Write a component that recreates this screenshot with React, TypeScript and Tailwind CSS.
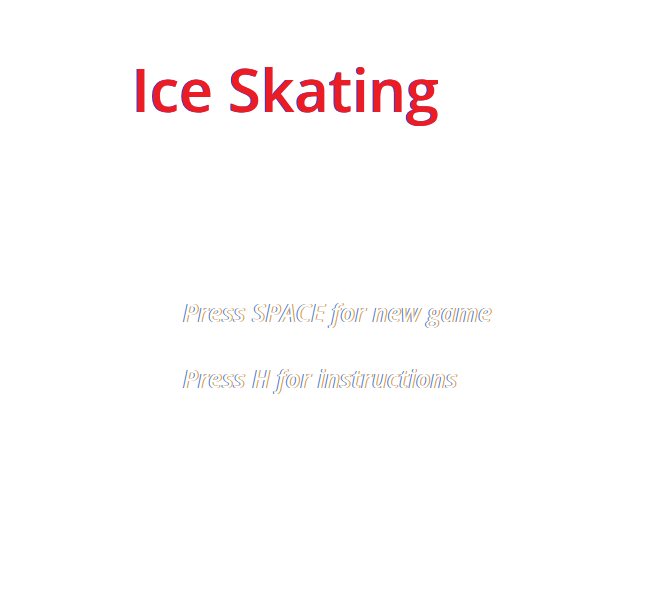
export default function App() {
  return (
    <div className="w-[659px] h-[609px] bg-white font-['Open_Sans',sans-serif]">
      <div className="pl-[132px] pt-[49px]">
        <h1 className="text-[59px] leading-[80px] font-semibold text-[#ec1c24] [text-shadow:-1px_0_0_#3a3ad0]">
          Ice Skating
        </h1>
      </div>
      <div className="pl-[183px] pt-[168px] flex flex-col gap-[36px]">
        <p className="text-[25px] leading-[30px] italic font-semibold text-white tracking-[0.35px] [text-shadow:1px_0_0_#d08a30,-1px_0_0_#3a70c8]">
          Press SPACE for new game
        </p>
        <p className="text-[25px] leading-[30px] italic font-semibold text-white tracking-[0.35px] [text-shadow:1px_0_0_#d08a30,-1px_0_0_#3a70c8]">
          Press H for instructions
        </p>
      </div>
    </div>
  );
}
